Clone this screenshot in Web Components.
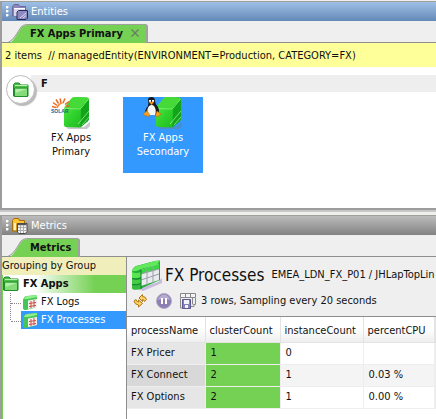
<!DOCTYPE html>
<html lang="en">
<head>
<meta charset="utf-8">
<title>Entities and Metrics</title>
<style>
html,body{height:100%}
body{margin:0;overflow:hidden;background:#efefef;color:#111;font:11px/16px "DejaVu Sans Condensed","Noto Sans",sans-serif;--green:#74d153;--line:#8e8e8e;--select:#3399ff}
</style>
</head>
<body>
<console-app></console-app>
<script>
const define=(name,html,setup)=>{
  const t=document.createElement('template');
  t.innerHTML='<style>*{box-sizing:border-box}button{font:inherit;color:inherit;border:0;background:none;padding:0;margin:0;text-align:inherit}svg{display:block;flex:none}</style>'+html;
  customElements.define(name,class extends HTMLElement{
    constructor(){super();this.attachShadow({mode:'open'}).append(t.content.cloneNode(true));}
    connectedCallback(){if(setup)setup(this,this.shadowRoot);}
  });
};

const icons={
entities:`<svg width="16" height="16" viewBox="0 0 16 16"><path d="M.5 12V2.500L2 .5h4.500L8 2.500h5.500V12z" fill="#8c86b8" stroke="#6d68a0"/><path d="M2 4h11v8H2z" fill="#d8d5ee"/><path d="M2 4h11v1H2z" fill="#fff"/><path d="M5 8l1.500-1.500h9V14L14 15.500H5z" fill="#8e8ac0" stroke="#2c2a58"/><path d="M8 14l6-5M11 14l3-2.500" stroke="#dcdaf4"/></svg>`,
metrics:`<svg width="16" height="16" viewBox="0 0 16 16"><path d="M.5 13V2.500L2 .5h4.500l1 2H12.500v3H5V13z" fill="#ffc436" stroke="#a56b05"/><path d="M2 5h2v7H2z" fill="#fff0bc"/><path d="M5.500 5.500h9.500v8l-1.500 2h-6.500l-1.500-1.500z" fill="#f4f4f4" stroke="#4a4a4a"/><path d="M6 6.500h8.500" stroke="#555" stroke-width="1.500"/><path d="M6 9.500h8M6 12.500h8M8.500 7v8M11.500 7v8" stroke="#aaa"/></svg>`,
folder:`<svg width="16" height="16" viewBox="0 0 16 16"><path d="M.5 14V2.500L2 1h4l1.500 2H15v11z" fill="#4dbd49" stroke="#198b27"/><path d="M2 3.500h12.500" stroke="#b7f2a8"/><path d="M1.500 14.500V6h13v8.500z" fill="#83dc78" stroke="#208e2b"/><path d="M2.500 7h11l-11 4z" fill="#b4efa8"/></svg>`,
close:`<svg width="8" height="8" viewBox="0 0 8 8"><path d="M.5.5l7 7M7.500.5l-7 7" stroke="#6b7b66" stroke-width="1.300"/></svg>`,
cell:`<svg width="15" height="15" viewBox="0 0 15 15"><path d="M0 5q1-4 4-4L14 0v11l-3 2-8 2q-3 0-3-2z" fill="#45c558"/><path d="M1 4q1-3 4-3L14 0v2L5 4z" fill="#8df08b"/><path d="M5 5.500L14 4v8l-9 2z" fill="#edf2ea"/><path d="M6 8.500l7-1M6 11.500l7-1M8 6v7M11 5v7" stroke="#d54a4a"/></svg>`,
table:`<svg width="31" height="31" viewBox="0 0 31 31"><path d="M7 29l20-7 4-4v5l-19 8z" fill="#b9a9d8" opacity=".75"/><path d="M1 12q0-4 4-6L24 1l5-.5V20L9 29q-8 1-8-3z" fill="#24ad38"/><path d="M1 11q1-4 5-5L24 1l5-.5L26 5 10 9q-5 3-9 2z" fill="#62e85b"/><path d="M10 10l18-6v16l-18 6z" fill="#e9ebef"/><path d="M10 10l18-6v5l-18 5z" fill="#38d841"/><path d="M10 14l18-5M10 20l18-6M16 9v16M22 6v17" stroke="#9ba0a8" fill="none"/><path d="M1 12q4 2 9 0v5q-5 2-9 1z" fill="#5be451"/><path d="M1 19q4 2 9 0v4q-5 2-9 1z" fill="#46cd47"/><path d="M1 25q4 1 9-1v5q-9 2-9-1z" fill="#36bd41"/><path d="M10 10v19M1 18.500q4 1.500 9-.5M1 24.500q5 1 9-1" stroke="#13822a" fill="none"/></svg>`,
refresh:`<svg width="15" height="16" viewBox="0 0 15 16"><path d="M9.500 1.500v2q3.500 0 4 3l-2 2q-.5-2-2-2v2l-3.500-3.500zM5.500 14v-2q-4-.5-4.500-4l2-1.500q.5 2.500 2.500 2.500V7l4 3.500z" fill="#ffd16a" stroke="#b17813"/></svg>`,
pause:`<svg width="16" height="16" viewBox="0 0 16 16"><circle cx="8" cy="8" r="7.500" fill="#8c7fb2" stroke="#b4abc9"/><path d="M2 7q1-5 6-5.500Q13 2 14 7q-6-2-12 0" fill="#b5abd0"/><path d="M6 5v6M10 5v6" stroke="#fff" stroke-width="2"/></svg>`,
save:`<svg width="16" height="16" viewBox="0 0 16 16"><path d="M.5.5h15v4H.5z" fill="#f4f4f8" stroke="#888"/><path d="M5.500 1v3M10.500 1v3M.5 5v10H2" stroke="#888" fill="none"/><path d="M2.500 6.500h8v9h-8z" fill="#8480b8" stroke="#5c5890"/><path d="M4 7h5v4H4zM5 12h3v3H5z" fill="#f3f3ff"/><path d="M12.500 5v6.500M15.500 5v6.500h-2M11 13.500h3V11" stroke="#888" fill="none"/></svg>`
};
const cube=`<defs><linearGradient id="f" x2="1" y2="1"><stop stop-color="#5df04c"/><stop offset=".5" stop-color="#2fd02c"/><stop offset="1" stop-color="#18b21d"/></linearGradient></defs><path d="M4 30h18l7-6v4l-4 4H6z" fill="#777" opacity=".4"/><path d="M2 12Q2 10 4 8L9 2q1.500-2 4-2l12 .5q2 0 2 2V21q0 2-1.500 3.500L20 29q-1 1.500-3 1.500L4 30q-2 0-2-2z" fill="url(#f)"/><path d="M3 10L9 2q1.500-2 4-2l12 .5 1.500 1L20 9.500Q19 11 17 11z" fill="#45da37"/><path d="M19 12q0-2 1.500-3.500L27 2v19q0 2-1.500 3.500L20 29l-1.500 1z" fill="#12a41b"/><path d="M3 11.500L17 12q2 0 3-2l6.500-8" stroke="#8df67a" fill="none" opacity=".8"/><path d="M16 27L27 14M20 28l7-8" stroke="#c8ffbb" opacity=".6"/>`;
const badges={
solar:`<path d="M1 9.500l4 1M2 5.500l4 3M5 2.500l2.500 4M9 1.500l1 4.500M14 1.500l-2 4.500M18 4.500l-4 3M19 8.500l-4 1" stroke="#ec6a23" stroke-width="1.500"/><path d="M5 11q2-6 8-5-5 1-6 5z" fill="#f28a35"/><text x="0" y="16" font-family="Liberation Sans,sans-serif" font-size="5" font-weight="700" fill="#245b91">SOLAR</text>`,
penguin:`<path d="M5 9Q6 6 5 3q0-3 3.500-3Q12 0 12 4q0 3 3 6 2 4 0 8H4Q0 14 5 9z" fill="#17191d"/><path d="M6 9q3-2 5 0 3 4 1 9H5q-2-5 1-9z" fill="#f7f7f7"/><path d="M6 3h2v2H6zM9 3h2v2H9z" fill="#fff"/><path d="M6 5h5l-2.500 3zM0 17.500l4-4 3 5-2 1zM18 17l-4-3-2 5 3 .5z" fill="#f5a21c" stroke="#b75d08" stroke-width=".5"/>`
};
for(const k in badges)icons['tile-'+k]=`<svg width="42" height="33" viewBox="0 0 42 33"><g transform="translate(14 0)">${cube}</g><g transform="translate(3 0)">${badges[k]}</g></svg>`;

define('ui-icon',`<style>:host{display:block;flex:none}</style>`,(h,r)=>{
  const b=document.createElement('div');
  b.innerHTML=icons[h.getAttribute('name')];
  r.append(b.firstElementChild);
});

define('title-bar',`<style>
:host{display:flex;align-items:center;height:20px;padding:0 12px 0 4px;gap:3px;border-top:1px solid #a0a09a;background:linear-gradient(#9fc0e6,#6389b8);color:#fff;font-size:11px}
:host([tone=gray]){background:linear-gradient(#bcbcbc,#828282)}
.grip{width:3px;height:12px;background:radial-gradient(circle at 1px 1px,#fff 1px,transparent 2px) 0 0/3px 4px}
h1{margin:0;font:inherit}
</style><span class="grip"></span><slot name="icon"></slot><h1><slot></slot></h1>`);

define('tab-strip',`<style>
:host{display:flex;height:22px;padding:3px 0 0 6px;border-bottom:1px solid #8e8e8e;background:#efefef}
.tab{display:flex;height:19px}
.edge{width:20px;height:19px}
.face{display:flex;align-items:center;gap:8px;padding:0 7px 0 2px;background:var(--green);border:1px solid #a0a0a0;border-width:1px 2px 0 0;border-radius:0 3px 0 0;font-weight:700}
</style><div class="tab"><svg class="edge" viewBox="0 0 20 19"><path d="M0 19h2Q5 17 8 12L13 4Q15 1 20 1V19z" fill="var(--green)"/><path d="M0 18.500Q4 17 8 11L13 3Q15 .5 20 .5" fill="none" stroke="#999"/></svg><div class="face"><button type="button"><slot></slot></button><slot name="close"></slot></div></div>`);

define('close-button',`<style>:host{display:block}</style><button type="button" aria-label="Close tab"><ui-icon name="close"></ui-icon></button>`);

define('entity-tile',`<style>
:host{display:block;width:80px}
button{display:flex;flex-direction:column;align-items:center;gap:1px;width:100%;height:76px;text-align:center;line-height:14px}
:host([selected]) button{background:var(--select);color:#fff}
ui-icon{margin-right:4px}
</style><button type="button"><span><slot></slot></span></button>`,(h,r)=>{
  const i=document.createElement('ui-icon');
  i.setAttribute('name','tile-'+h.getAttribute('kind'));
  r.querySelector('button').prepend(i);
});

define('entity-group',`<style>
:host{display:block;padding:8px 0 0 4px}
header{display:flex;height:22px}
.badge{flex:none;display:grid;place-items:center;width:29px;height:29px;border-radius:50%;background:#fff;border:1px solid #bbb;box-shadow:2px 2px 1px #bbb;position:relative}
h2{flex:1;height:17px;margin:0 0 0 -4px;padding-left:10px;background:#eee;font:inherit;font-weight:700;font-size:11px;line-height:18px}
.tiles{display:flex;flex-wrap:wrap;gap:12px;padding-left:25px}
</style><header><span class="badge"><ui-icon name="folder"></ui-icon></span><h2><slot name="title"></slot></h2></header><div class="tiles"><slot></slot></div>`);

define('entities-panel',`<style>
:host{display:grid;grid-template-rows:auto auto auto 1fr;border:2px solid #9c9c9c;border-width:0 0 2px 2px;background:#fff;box-shadow:0 2px 0 #c8c8c8}
.query{padding:5px 3px 3px;background:#ffff99;white-space:pre}
</style>
<title-bar><ui-icon slot="icon" name="entities"></ui-icon>Entities</title-bar>
<tab-strip>FX Apps Primary<close-button slot="close"></close-button></tab-strip>
<div class="query">2 items  // managedEntity(ENVIRONMENT=Production, CATEGORY=FX)</div>
<entity-group><span slot="title">F</span>
<entity-tile kind="solar">FX Apps<br>Primary</entity-tile>
<entity-tile kind="penguin" selected>FX Apps<br>Secondary</entity-tile></entity-group>`);

define('group-tree',`<style>
:host{display:grid;grid-template-rows:auto 1fr;background:#fff;border-right:1px solid var(--line)}
.caption{height:18px;line-height:18px;background:#f0eebb;white-space:nowrap}
ul{list-style:none;margin:0;padding:0}
.tree{border-left:1px solid var(--green)}
button{display:flex;align-items:center;width:100%;height:18px;white-space:nowrap;gap:3px;line-height:18px}
.root{background:linear-gradient(90deg,#fff 25%,var(--green) 75%);font-weight:700;gap:4px}
ul ul{padding-left:7px}
li li{display:grid;grid-template-columns:11px 1fr;background:repeating-linear-gradient(#888 0 1px,transparent 1px 2px) 0 0/1px 18px no-repeat}
li li:last-child{background-size:1px 9px}
li li::before{content:"";height:10px;margin-left:1px;border-bottom:1px dotted #888}
li li button{padding-left:2px}
button[aria-current]{background:var(--select);color:#fff}
</style><div class="caption">Grouping by Group</div>
<ul class="tree"><li><button type="button" class="root"><ui-icon name="folder"></ui-icon>FX Apps</button><ul>
<li><button type="button"><ui-icon name="cell"></ui-icon>FX Logs</button></li>
<li><button type="button" aria-current="true"><ui-icon name="cell"></ui-icon>FX Processes</button></li></ul></li></ul>`);

define('metric-header',`<style>
:host{display:block;padding:2px 0 5px 4px;border-bottom:1px solid var(--line);overflow:hidden;white-space:nowrap}
.name,.tools,.actions{display:flex;align-items:center}
.name{height:32px;gap:3px}
h2{margin:0 4px 0 0;font:inherit;font-size:17px;line-height:24px}
.tools{height:20px;gap:5px;padding-left:2px}
.actions{gap:8px}
</style><div class="name"><ui-icon name="table"></ui-icon><h2>FX Processes</h2><span>EMEA_LDN_FX_P01 / JHLapTopLin</span></div>
<div class="tools"><div class="actions"><button type="button" aria-label="Refresh"><ui-icon name="refresh"></ui-icon></button><button type="button" aria-label="Pause"><ui-icon name="pause"></ui-icon></button><button type="button" aria-label="Save"><ui-icon name="save"></ui-icon></button></div><span>3 rows, Sampling every 20 seconds</span></div>`);

define('metric-table',`<style>
:host{display:block;background:#fff}
table{width:100%;table-layout:fixed;border-collapse:collapse}
col.a{width:78px}col.b{width:75px}col.c{width:83px}col.d{width:71px}
th,td{height:22px;padding:0 4px;text-align:left;font-weight:400;white-space:nowrap;border-right:1px solid #eee;border-bottom:1px solid #eee}
thead th{height:25px;padding-top:4px;background:linear-gradient(#fff 45%,#eee);border-color:#e3e3e3}
tbody th{background:#e6e6e6}
tbody tr:nth-child(2) th{background:#d8d8d8}
tbody tr:nth-child(2) td{background:#f4f4f4}
tbody tr td:nth-child(2){background:var(--green)}
td{padding-left:5px}
</style><table><colgroup><col class="a"><col class="b"><col class="c"><col class="d"><col></colgroup>
<thead><tr><th scope="col">processName</th><th scope="col">clusterCount</th><th scope="col">instanceCount</th><th scope="col">percentCPU</th><th></th></tr></thead>
<tbody><tr><th scope="row">FX Pricer</th><td>1</td><td>0</td><td></td><td></td></tr>
<tr><th scope="row">FX Connect</th><td>2</td><td>1</td><td>0.03 %</td><td></td></tr>
<tr><th scope="row">FX Options</th><td>2</td><td>1</td><td>0.00 %</td><td></td></tr></tbody></table>`);

define('metrics-panel',`<style>
:host{display:grid;grid-template-rows:auto auto 1fr;border-left:2px solid #9c9c9c}
.split{display:grid;grid-template-columns:125px minmax(0,1fr)}
.detail{display:grid;grid-template-rows:auto 1fr}
.detail>*{min-width:0}
</style><title-bar tone="gray"><ui-icon slot="icon" name="metrics"></ui-icon>Metrics</title-bar>
<tab-strip>Metrics</tab-strip>
<div class="split"><group-tree></group-tree><div class="detail"><metric-header></metric-header><metric-table></metric-table></div></div>`);

define('console-app',`<style>:host{display:grid;box-sizing:border-box;grid-template-rows:209fr 204fr;gap:5px;height:100vh;padding-top:1px}</style><entities-panel></entities-panel><metrics-panel></metrics-panel>`);
</script>
</body>
</html>
